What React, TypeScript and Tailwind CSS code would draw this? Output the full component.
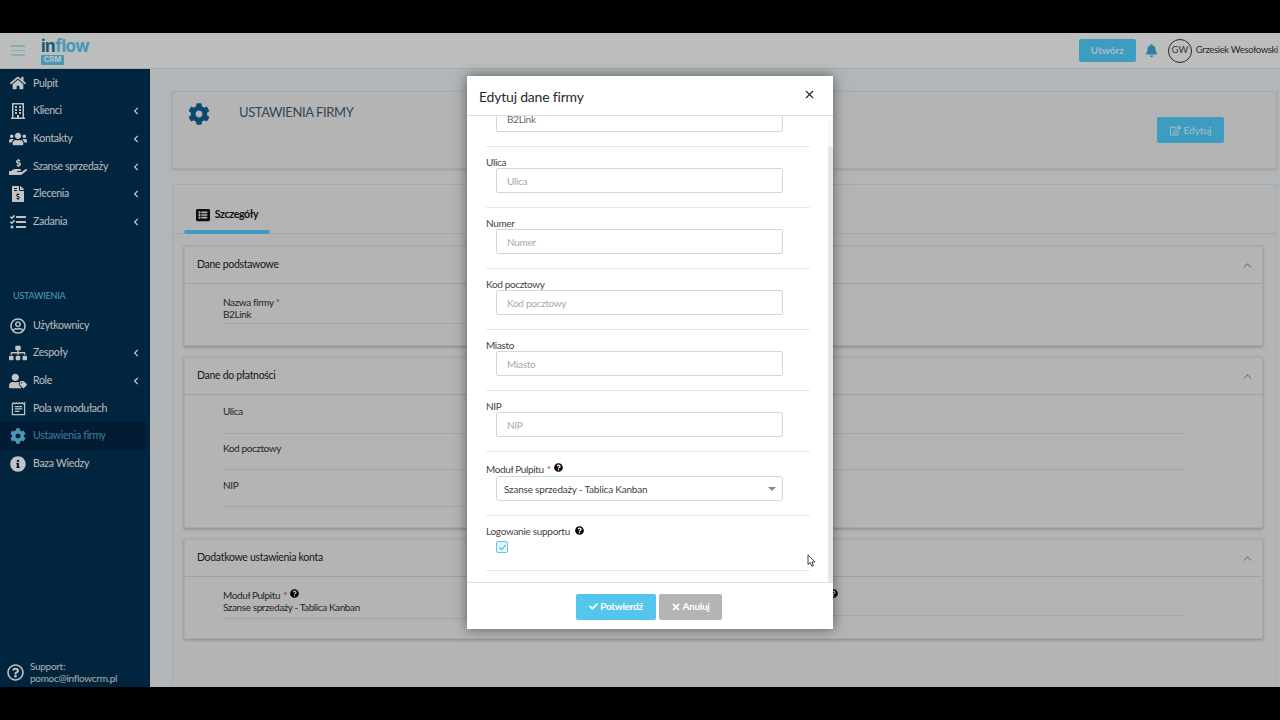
import type { ReactNode } from "react";
import {
  FaBell,
  FaCheck,
  FaChevronLeft,
  FaCog,
  FaFileInvoiceDollar,
  FaHandHoldingUsd,
  FaHome,
  FaInfoCircle,
  FaListAlt,
  FaQuestionCircle,
  FaRegBuilding,
  FaRegEdit,
  FaRegQuestionCircle,
  FaRegUserCircle,
  FaSitemap,
  FaTasks,
  FaTimes,
  FaUserTag,
  FaUsers,
} from "react-icons/fa";
import { FiChevronUp, FiX } from "react-icons/fi";

const font = "font-['Lato','Liberation_Sans',sans-serif]";

const FieldsIcon = () => (
  <svg viewBox="0 0 16 16" className="w-[15px] h-[15px]" fill="none" stroke="currentColor">
    <path strokeWidth="1.3" d="M1.5 3 L3 1.8 L4.5 3 L6 1.8 L7.5 3 L9 1.8 L10.5 3 L12 1.8 L13.5 3 L14.5 2 V14.5 H1.5 Z" />
    <path strokeWidth="1.3" d="M4 6 H12 M4 8.5 H12 M4 11 H9" />
  </svg>
);

const NavItem = ({
  icon,
  label,
  arrow,
  active,
}: {
  icon: ReactNode;
  label: string;
  arrow?: boolean;
  active?: boolean;
}) => (
  <div
    className={`flex items-center h-[27.7px] w-[146px] pr-[6px] text-[10.5px] tracking-[-0.3px] ${
      active ? "bg-[#022440] text-[#4f9cc0]" : "text-[#e8e8e8]"
    }`}
  >
    <div className={`w-[33px] flex justify-center text-[16px] pl-[3px] ${active ? "text-[#5cbde2]" : "text-[#f4f4f4]"}`}>
      {icon}
    </div>
    <span className="flex-1">{label}</span>
    {arrow && <FaChevronLeft className="text-[8px] text-white" />}
  </div>
);

const Field = ({ label, value, extra }: { label?: ReactNode; value?: string; extra?: string }) => (
  <div className={`text-[10px] tracking-[-0.4px] leading-[12px] text-[#303030] border-b border-[#cfcfcf] ${extra ?? ""}`}>
    {label}
    {value && <div>{value}</div>}
  </div>
);

const Panel = ({
  title,
  children,
  height,
}: {
  title: string;
  children: ReactNode;
  height: string;
}) => (
  <section className={`bg-[#e1e1e1] border border-[#d4d4d4] shadow-[0_1px_3px_rgba(0,0,0,0.25)] ${height}`}>
    <div className="h-[37px] flex items-center justify-between pl-[12px] pr-[8px] border-b border-[#c6c9cc] text-[10.5px] tracking-[-0.3px] text-[#222]">
      <span>{title}</span>
      <FiChevronUp className="text-[13px] text-[#999]" />
    </div>
    {children}
  </section>
);

const ModalRow = ({ label, placeholder }: { label: string; placeholder: string }) => (
  <div className="h-[61px] pt-[9px] pb-[14px] border-b border-[#e9e9e9]">
    <div className="h-[12px] leading-[13px] text-[10px] tracking-[-0.35px] text-[#444]">{label}</div>
    <input
      readOnly
      placeholder={placeholder}
      className="block ml-[10px] w-[287px] h-[25px] px-[10px] border border-[#d6d6d6] rounded-[2px] text-[10px] tracking-[-0.3px] outline-none placeholder:text-[#a8a8a8]"
    />
  </div>
);

export default function App() {
  return (
    <div className={`${font} relative w-[1280px] h-[720px] bg-black overflow-hidden`}>
      <div className="relative mt-[33px] h-[654px] flex flex-col bg-[#dfe4e6] overflow-hidden">
        {/* top bar */}
        <header className="h-[36px] shrink-0 flex items-center bg-[#ebeeee] border-b border-[#d5d8d8] pr-[2px]">
          <div className="w-[14px] ml-[11px] flex flex-col gap-[3px]">
            <span className="h-[1.5px] bg-[#a6dcee]" />
            <span className="h-[1.5px] bg-[#a6dcee]" />
            <span className="h-[1.5px] bg-[#a6dcee]" />
          </div>
          <div className="ml-[16px] w-[50px] flex flex-col font-['Inter',sans-serif] font-bold">
            <div className="text-[17px] leading-[15px] tracking-[-0.5px] text-[#5cbde2] mt-[2px]">
              <span className="text-[#1c6f96]">in</span>flow
            </div>
            <div className="w-[23px] h-[10px] mt-[1px] bg-[#5cbde2] rounded-[1px] text-[7.5px] leading-[10px] text-center text-[#e4f5fb]">CRM</div>
          </div>
          <div className="flex-1" />
          <button className="w-[57px] h-[23px] rounded-[2px] bg-[#4ec4f2] text-[10px] font-bold text-[#cfeefa]">Utwórz</button>
          <FaBell className="ml-[9px] text-[13px] text-[#3d9fc6]" />
          <div className="ml-[10px] w-[24px] h-[24px] rounded-full border border-[#303030] flex items-center justify-center text-[9.5px] text-[#444]">GW</div>
          <span className="ml-[4px] text-[9.5px] tracking-[-0.35px] text-[#333] whitespace-nowrap">Grzesiek Wesołowski</span>
        </header>

        <div className="flex-1 flex min-h-0">
          {/* sidebar */}
          <aside className="w-[150px] shrink-0 flex flex-col pt-[0.6px] bg-[#032f4f]">
            <NavItem icon={<FaHome />} label="Pulpit" />
            <NavItem icon={<FaRegBuilding />} label="Klienci" arrow />
            <NavItem icon={<FaUsers className="text-[18px]" />} label="Kontakty" arrow />
            <NavItem icon={<FaHandHoldingUsd className="text-[18px]" />} label="Szanse sprzedaży" arrow />
            <NavItem icon={<FaFileInvoiceDollar />} label="Zlecenia" arrow />
            <NavItem icon={<FaTasks />} label="Zadania" arrow />
            <div className="mt-[53px] mb-[10px] pl-[13px] h-[13px] leading-[13px] text-[9px] tracking-[-0.2px] text-[#6cc0e0]">USTAWIENIA</div>
            <NavItem icon={<FaRegUserCircle />} label="Użytkownicy" />
            <NavItem icon={<FaSitemap className="text-[18px]" />} label="Zespoły" arrow />
            <NavItem icon={<FaUserTag className="text-[18px]" />} label="Role" arrow />
            <NavItem icon={<FieldsIcon />} label="Pola w modułach" />
            <NavItem icon={<FaCog />} label="Ustawienia firmy" active />
            <NavItem icon={<FaInfoCircle />} label="Baza Wiedzy" />
            <div className="mt-auto mb-[3px] flex items-center pl-[7px] text-[10px] tracking-[-0.3px] leading-[12px] text-[#d8d8d8]">
              <FaRegQuestionCircle className="text-[17px] mr-[6px] text-[#f0f0f0]" />
              <div>
                Support:
                <br />
                pomoc@inflowcrm.pl
              </div>
            </div>
          </aside>

          {/* page content */}
          <main className="flex-1 min-w-0 pl-[22px] pr-[3px] pt-[22px]">
            <div className="relative h-[78px] flex bg-[#e1e1e1] border border-[#d4d4d4] shadow-[0_1px_2px_rgba(0,0,0,0.15)]">
              <FaCog className="ml-[15px] mt-[11px] text-[22px] text-[#0f5a8c]" />
              <h1 className="ml-[29px] mt-[11px] text-[13px] tracking-[-0.4px] leading-[18px] text-[#40586c]">USTAWIENIA FIRMY</h1>
              <button className="absolute right-[52px] top-[25px] w-[67px] h-[26px] rounded-[2px] bg-[#4ec4f2] flex items-center justify-center gap-[3px] text-[10px] text-[#cfeefa]">
                <FaRegEdit className="text-[11px]" />
                Edytuj
              </button>
            </div>

            <div className="mt-[15px] h-[520px] bg-[#e1e1e1] border border-[#d4d4d4] pl-[11px] pr-[13px]">
              <div className="relative h-[49px] -ml-[11px] -mr-[13px] border-b border-[#cfd2d4]">
                <div className="absolute left-[11px] top-[22px] w-[86px] flex items-center justify-center gap-[5px] text-[10.5px] tracking-[-0.3px] font-bold text-[#111]">
                  <FaListAlt className="text-[14px]" />
                  Szczegóły
                </div>
                <div className="absolute left-[11px] -bottom-[1px] w-[86px] h-[4px] rounded-full bg-[#4ec4f2]" />
              </div>

              <div className="mt-[12px] flex flex-col gap-[11px]">
                <Panel title="Dane podstawowe" height="h-[100px]">
                  <div className="pl-[38px] pr-[78px] pt-[12px]">
                    <Field
                      extra="w-[460px] h-[28px]"
                      label={
                        <span>
                          Nazwa firmy <span className="text-[#d02030]">*</span>
                        </span>
                      }
                      value="B2Link"
                    />
                  </div>
                </Panel>

                <Panel title="Dane do płatności" height="h-[171px]">
                  <div className="pl-[38px] pr-[78px] pt-[10px] grid grid-cols-[520px_1fr]">
                    <div>
                      <Field extra="h-[29px] mr-[40px]" label="Ulica" />
                      <Field extra="mt-[8px] h-[28px] mr-[40px]" label="Kod pocztowy" />
                      <Field extra="mt-[9px] h-[28px] mr-[40px]" label="NIP" />
                    </div>
                    <div>
                      <Field extra="h-[29px]" label="Numer" />
                      <Field extra="mt-[8px] h-[28px]" label="Miasto" />
                    </div>
                  </div>
                </Panel>

                <Panel title="Dodatkowe ustawienia konta" height="h-[100px]">
                  <div className="pl-[38px] pr-[78px] pt-[12px] grid grid-cols-[520px_1fr] items-start">
                    <Field
                      extra="h-[30px] mr-[40px]"
                      label={
                        <span className="inline-flex items-center gap-[3px]">
                          Moduł Pulpitu <span className="text-[#d02030]">*</span>
                          <FaQuestionCircle className="text-[9px] text-black -mt-[3px]" />
                        </span>
                      }
                      value="Szanse sprzedaży - Tablica Kanban"
                    />
                    <Field
                      extra="h-[27px]"
                      label={
                        <span className="inline-flex items-center gap-[4px]">
                          Logowanie supportu
                          <FaQuestionCircle className="text-[9px] text-black -mt-[3px]" />
                        </span>
                      }
                    />
                  </div>
                </Panel>
              </div>
            </div>
          </main>
        </div>

        {/* modal backdrop */}
        <div className="absolute inset-0 bg-black/20" />
      </div>

      {/* edit dialog */}
      <div className="absolute left-[467px] top-[76px] w-[366px] h-[553px] flex flex-col bg-white shadow-[0_0_12px_rgba(0,0,0,0.5)]">
        <div className="h-[40px] shrink-0 flex items-center justify-between pl-[12px] pr-[18px] border-b border-[#dedede]">
          <h2 className="mt-[2px] text-[14px] tracking-[-0.2px] text-[#2a2a2a]">Edytuj dane firmy</h2>
          <FiX className="text-[13px] text-[#222] -mt-[3px] -mr-[1px]" />
        </div>

        <div className="relative flex-1 min-h-0 overflow-hidden">
          <div className="w-[324px] ml-[19px]">
            {/* row scrolled up under the dialog header */}
            <div className="flow-root h-[31px] pb-[14px] border-b border-[#e9e9e9]">
              <input
                readOnly
                value="B2Link"
                className="block -mt-[10px] ml-[10px] w-[287px] h-[26px] px-[10px] border border-[#d6d6d6] rounded-[2px] text-[10px] tracking-[-0.3px] text-[#666] outline-none"
              />
            </div>
            <ModalRow label="Ulica" placeholder="Ulica" />
            <ModalRow label="Numer" placeholder="Numer" />
            <ModalRow label="Kod pocztowy" placeholder="Kod pocztowy" />
            <ModalRow label="Miasto" placeholder="Miasto" />
            <ModalRow label="NIP" placeholder="NIP" />

            <div className="h-[64px] pt-[11px] border-b border-[#e9e9e9]">
              <div className="h-[12px] leading-[14px] text-[10px] tracking-[-0.35px] text-[#444] flex items-center gap-[3px]">
                Moduł Pulpitu <span className="text-[#d02030]">*</span>
                <FaQuestionCircle className="text-[9px] text-black -mt-[4px]" />
              </div>
              <div className="ml-[10px] mt-[1px] w-[287px] h-[25px] pl-[7px] pr-[6px] pt-[1px] flex items-center justify-between border border-[#d6d6d6] rounded-[3px] text-[10px] tracking-[-0.2px] text-[#444]">
                Szanse sprzedaży - Tablica Kanban
                <span className="border-x-[4px] border-x-transparent border-t-[4px] border-t-[#888]" />
              </div>
            </div>

            <div className="h-[55px] pt-[9px] border-b border-[#e9e9e9]">
              <div className="h-[12px] leading-[14px] text-[10px] tracking-[-0.3px] text-[#444] flex items-center gap-[5px]">
                Logowanie supportu
                <FaQuestionCircle className="text-[9px] text-black -mt-[2px]" />
              </div>
              <div className="ml-[10px] mt-[4px] w-[12px] h-[12px] rounded-[2px] border-[1.5px] border-[#62c6e8] bg-[#e4f6fc] flex items-center justify-center">
                <svg viewBox="0 0 10 10" className="w-[9px] h-[9px]" fill="none" stroke="#4fb4d8" strokeWidth="1.3">
                  <path d="M1.5 5 L4 7.5 L8.5 2" />
                </svg>
              </div>
            </div>
          </div>

          {/* scrollbar */}
          <div className="absolute right-0 top-[4px] bottom-0 w-[5px] bg-[#f8f8f8]">
            <div className="mt-[27px] h-[436px] bg-[#e6e6e6]" />
          </div>
        </div>

        <div className="h-[47px] shrink-0 flex items-center justify-center gap-[3px] border-t border-[#dedede] pt-[1px] pr-[2px]">
          <button className="w-[80px] h-[26px] flex items-center justify-center gap-[2px] rounded-[2px] bg-[#54c6ee] text-[10px] tracking-[-0.3px] font-bold text-white">
            <FaCheck className="text-[9px]" />
            Potwierdź
          </button>
          <button className="w-[63px] h-[26px] flex items-center justify-center gap-[1px] rounded-[2px] bg-[#b4b4b4] text-[10px] tracking-[-0.3px] font-bold text-white">
            <FaTimes className="text-[10px]" />
            Anuluj
          </button>
        </div>
      </div>

      {/* mouse pointer */}
      <svg viewBox="0 0 10 16" className="absolute left-[807px] top-[554px] w-[9px] h-[14px]" fill="#fff" stroke="#222" strokeWidth="1">
        <path d="M1 1 L1 12 L3.6 9.8 L5.4 14 L7.2 13.2 L5.5 9.2 L9 9 Z" />
      </svg>
    </div>
  );
}
